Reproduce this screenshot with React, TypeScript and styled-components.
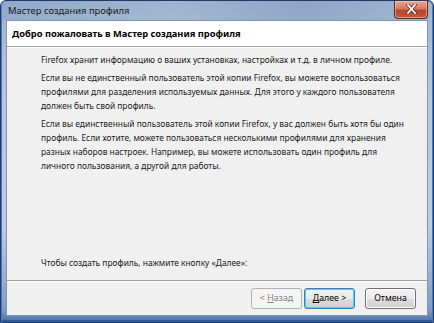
import styled, { createGlobalStyle } from "styled-components";

const GlobalStyle = createGlobalStyle`
  html, body {
    margin: 0;
    padding: 0;
    width: 434px;
    height: 323px;
    overflow: hidden;
    background: #ffffff;
  }
  * {
    box-sizing: border-box;
  }
`;

const Window = styled.div`
  width: 434px;
  height: 323px;
  display: flex;
  flex-direction: column;
  padding: 0 5px 6px 5px;
  font-family: "Noto Sans", "Segoe UI", sans-serif;
  font-size: 8.4px;
  color: #1a1a1a;
  background: linear-gradient(180deg, #9fb4cf 0%, #b6c7dd 30%, #bccde2 70%, #7f9dc6 96%, #4a72aa 100%);
  border: 1px solid #1e3a66;
  border-radius: 6px 6px 0 0;
  box-shadow: inset 1px 0 0 #4d78b3, inset -1px 0 0 #4d78b3, inset 0 -2px 0 #2e5a99;
`;

const TitleBar = styled.div`
  height: 19px;
  display: flex;
  align-items: center;
  justify-content: space-between;
  margin: 0 -5px;
  padding: 0 5px 0 7px;
  background: linear-gradient(90deg, rgba(120, 150, 190, 0.35), rgba(255, 255, 255, 0) 40%, rgba(90, 120, 170, 0.25) 70%, rgba(255, 255, 255, 0));
`;

const Title = styled.span`
  font-size: 9.4px;
  color: #1c1c1c;
  line-height: 1;
`;

const CloseButton = styled.div`
  width: 34px;
  height: 18px;
  margin-top: -2px;
  border: 1px solid #5a2a22;
  border-top: none;
  border-radius: 0 0 4px 4px;
  background: linear-gradient(180deg, #e7a98f 0%, #d47a5e 45%, #b8452c 55%, #c4583c 100%);
  box-shadow: inset 0 0 0 1px rgba(255, 220, 200, 0.5);
  display: flex;
  align-items: center;
  justify-content: center;
`;

const Client = styled.div`
  flex: 1;
  display: flex;
  flex-direction: column;
  background: #f0f0f0;
  border: 1px solid #8296b2;
`;

const Header = styled.div`
  height: 26px;
  background: #ffffff;
  display: flex;
  align-items: center;
  padding-left: 5px;
  font-weight: 700;
  font-size: 9.3px;
  color: #000;
  border-bottom: 1px solid #a0a0a0;
  box-shadow: 0 1px 0 #ffffff;
`;

const Body = styled.div`
  flex: 1;
  display: flex;
  flex-direction: column;
  padding: 6px 10px 0 34px;
`;

const Paragraph = styled.p`
  margin: 0 0 4px 0;
  line-height: 14px;
  white-space: nowrap;
`;

const Spacer = styled.div`
  flex: 1;
`;

const Prompt = styled.p`
  margin: 0 0 10px 0;
  line-height: 14px;
`;

const Footer = styled.div`
  height: 35px;
  border-top: 1px solid #a0a0a0;
  box-shadow: inset 0 1px 0 #ffffff;
  display: flex;
  align-items: center;
  justify-content: flex-end;
  padding: 0 11px 0 0;
`;

const Button = styled.button<{ $primary?: boolean; $gap?: number }>`
  width: 51px;
  height: 21px;
  margin-left: ${(p) => p.$gap ?? 0}px;
  font-family: "Noto Sans", "Segoe UI", sans-serif;
  font-size: 8.8px;
  color: #000;
  padding: 0;
  border-radius: 3px;
  border: 1px solid ${(p) => (p.$primary ? "#3c7fb1" : "#707070")};
  background: linear-gradient(180deg, #f2f2f2 0%, #ebebeb 50%, #dddddd 51%, #cfcfcf 100%);
  box-shadow: inset 0 0 0 1px ${(p) => (p.$primary ? "#48d2f8" : "#fcfcfc")};
  &:disabled {
    color: #838383;
    border-color: #adb2b5;
    background: #f4f4f4;
    box-shadow: none;
  }
`;

const Underline = styled.span`
  text-decoration: underline;
`;

export default function App() {
  return (
    <>
      <GlobalStyle />
      <Window>
        <TitleBar>
          <Title>Мастер создания профиля</Title>
          <CloseButton>
            <svg width="11" height="10" viewBox="0 0 11 10">
              <path d="M2 1 L9 9 M9 1 L2 9" stroke="#5a2a22" strokeWidth="3.2" strokeLinecap="square" />
              <path d="M2 1 L9 9 M9 1 L2 9" stroke="#ffffff" strokeWidth="1.8" strokeLinecap="square" />
            </svg>
          </CloseButton>
        </TitleBar>
        <Client>
          <Header>Добро пожаловать в Мастер создания профиля</Header>
          <Body>
            <Paragraph>
              Firefox хранит информацию о ваших установках, настройках и т.д. в личном профиле.
            </Paragraph>
            <Paragraph>
              Если вы не единственный пользователь этой копии Firefox, вы можете воспользоваться
              <br />
              профилями для разделения используемых данных. Для этого у каждого пользователя
              <br />
              должен быть свой профиль.
            </Paragraph>
            <Paragraph>
              Если вы единственный пользователь этой копии Firefox, у вас должен быть хотя бы один
              <br />
              профиль. Если хотите, можете пользоваться несколькими профилями для хранения
              <br />
              разных наборов настроек. Например, вы можете использовать один профиль для
              <br />
              личного пользования, а другой для работы.
            </Paragraph>
            <Spacer />
            <Prompt>Чтобы создать профиль, нажмите кнопку «Далее»:</Prompt>
          </Body>
          <Footer>
            <Button disabled>
              &lt; <Underline>Н</Underline>азад
            </Button>
            <Button $primary $gap={2}>
              <Underline>Д</Underline>алее &gt;
            </Button>
            <Button $gap={10}>Отмена</Button>
          </Footer>
        </Client>
      </Window>
    </>
  );
}
